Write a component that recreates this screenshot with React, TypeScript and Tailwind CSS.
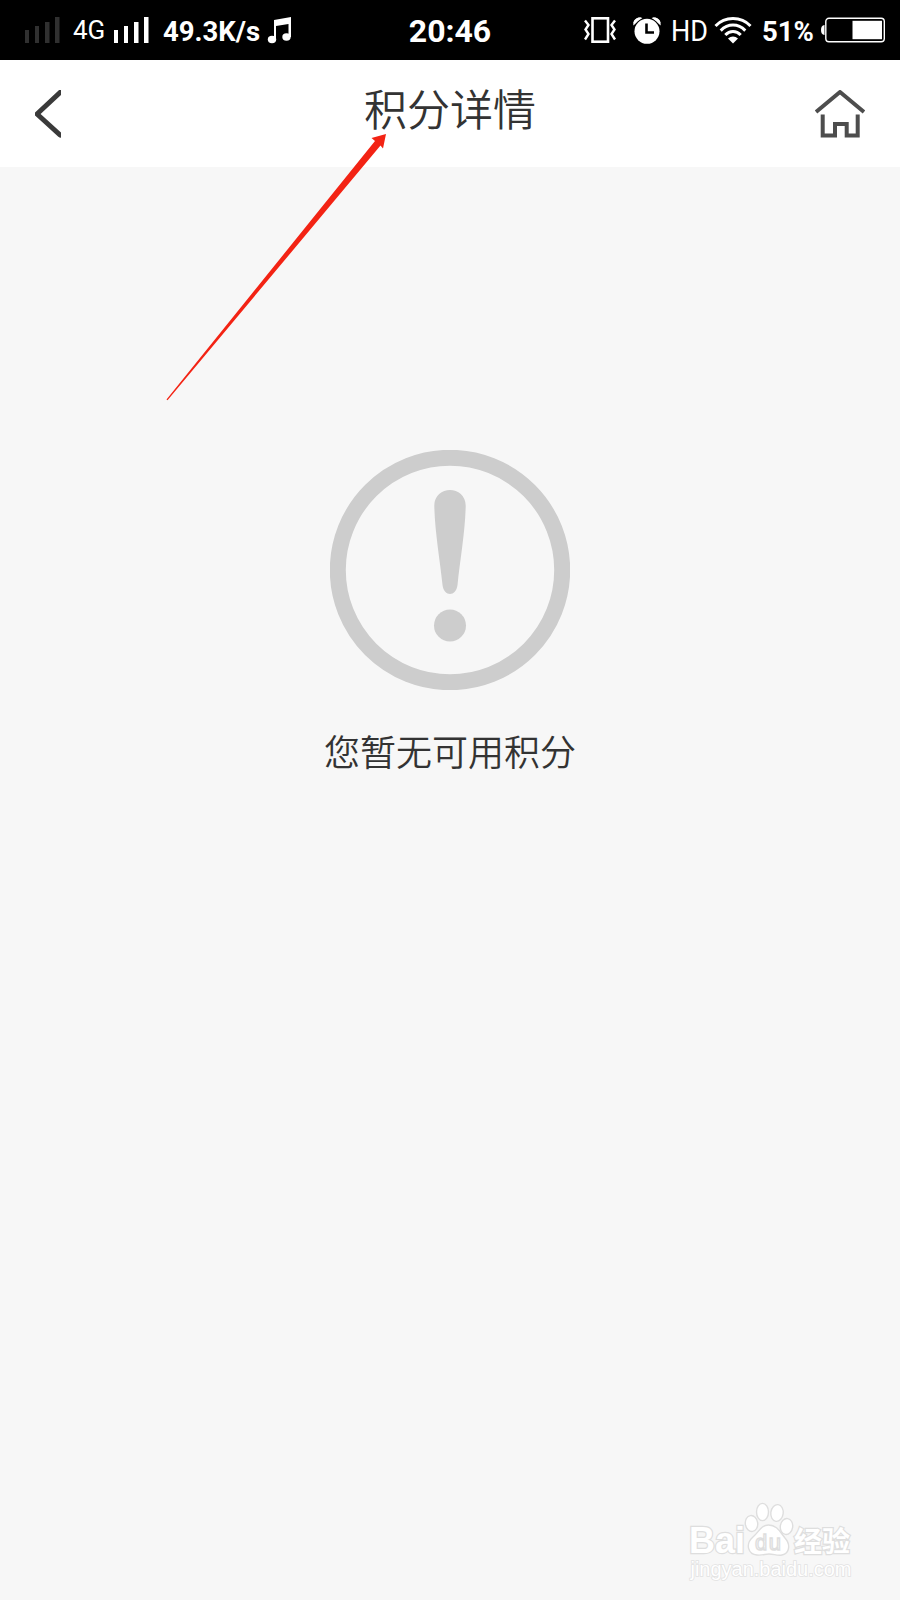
import React from "react";

const SignalBars = ({ className }: { className: string }): JSX.Element => (
  <svg className={`block h-[26px] w-[35px] shrink-0 ${className}`} viewBox="0 0 35 26" fill="currentColor">
    <rect x="0" y="13" width="4" height="13" />
    <rect x="10" y="9" width="4" height="17" />
    <rect x="20" y="5" width="4.5" height="21" />
    <rect x="30" y="0" width="4.5" height="26" />
  </svg>
);

const StatusBar = () => {
  return (
    <div className="grid h-[60px] grid-cols-[1fr_auto_1fr] items-center bg-black font-['Roboto',sans-serif] text-white">
      <div className="flex items-center pl-[25px]">
        <SignalBars className="text-[#303030]" />
        <span className="ml-[13px] w-[41px] text-[26px] leading-[60px]">4G</span>
        <SignalBars className="text-white" />
        <span className="ml-[14px] w-[104px] pt-[3px] text-[27.5px] font-bold leading-[57px]">49.3K/s</span>
        {/* music note */}
        <svg className="block h-[27px] w-[25px]" viewBox="0 0 25 27" fill="white">
          <path d="M7 3 L24 0 V20 H21.5 V7 L9 9 V22 H7 Z" />
          <ellipse cx="5" cy="22.5" rx="4.2" ry="3.7" />
          <ellipse cx="19.5" cy="20" rx="4.2" ry="3.7" />
        </svg>
      </div>

      <div className="pt-[3px] text-[32px] font-bold leading-[57px]">20:46</div>

      <div className="flex items-center justify-end pr-[15px]">
        {/* vibrate */}
        <svg className="block h-[26px] w-[33px]" viewBox="0 0 33 26" fill="none" stroke="white">
          <rect x="8.5" y="1.3" width="15.5" height="23.4" strokeWidth="2.6" />
          <path d="M1 3.5 L4.5 8 L1.5 12.5 L4.5 17 L1 22.5 M31 3.5 L27.5 8 L30.5 12.5 L27.5 17 L31 22.5" strokeWidth="2.4" />
        </svg>
        {/* alarm */}
        <svg className="ml-[16px] block h-[27px] w-[28px]" viewBox="0 0 28 27">
          <path d="M0.3 8.5 C0 3 5 -1 9.5 1 Z M27.7 8.5 C28 3 23 -1 18.5 1 Z" fill="white" />
          <circle cx="14" cy="14.3" r="13.6" fill="black" />
          <path d="M0.3 6.5 C0.5 2 5 -0.5 8.5 0.8 Z M27.7 6.5 C27.500 2 23 -0.5 19.500 0.8 Z" fill="white" />
          <circle cx="14" cy="14.3" r="12.5" fill="white" />
          <path d="M13.5 6.5 V15.5 H21" fill="none" stroke="black" strokeWidth="2.6" />
        </svg>
        <span className="ml-[10px] w-[43px] origin-left scale-x-90 pt-[2px] text-[30px] leading-[58px]">HD</span>
        {/* wifi */}
        <svg className="block h-[27px] w-[38px]" viewBox="0 0 38 27" fill="none" stroke="white" strokeWidth="3">
          <path d="M1.5 9 C11 -0.9 27 -0.9 36.5 9" />
          <path d="M6.7 13.6 C14 6.2 24 6.2 31.3 13.6" />
          <path d="M11.3 18 C15.7 13.4 22.3 13.4 26.7 18" />
          <path d="M14 21.5 C17 18.8 21 18.8 24 21.5 L19 26.5 Z" fill="white" stroke="none" />
        </svg>
        <span className="ml-[10px] w-[59px] pt-[3px] text-[27.5px] font-bold leading-[57px]">51%</span>
        {/* battery */}
        <svg className="block h-[26px] w-[64px]" viewBox="0 0 64 26">
          <path d="M3.5 8 C1 8.5 0 10 0 13 C0 16 1 17.5 3.5 18 Z" fill="white" />
          <rect x="4.8" y="1.2" width="58.5" height="23.6" rx="3.2" fill="none" stroke="white" strokeWidth="1.4" />
          <rect x="31.5" y="3.8" width="29.5" height="18.4" fill="white" />
        </svg>
      </div>
    </div>
  );
};

const Header = () => {
  return (
    <header className="flex h-[107px] items-start justify-between bg-white pl-[35px] pr-[35px]">
      <button className="mt-[30px] w-[50px]" aria-label="back">
        <svg className="block h-[48px] w-[26px]" viewBox="0 0 26 48" fill="none" stroke="#3a3a3a" strokeWidth="5">
          <path d="M25 2.5 L2 24 L25 45" strokeLinejoin="round" strokeLinecap="round" />
        </svg>
      </button>
      <h1 className="mt-[16px] text-[43px] font-[350] leading-[62px] text-[#333]">积分详情</h1>
      <button className="mt-[30px] w-[50px]" aria-label="home">
        <svg className="block h-[48px] w-[50px]" viewBox="0 0 50 48" fill="none" stroke="#4d4d4d" strokeWidth="4">
          <path d="M1 22 L25 2 L49 22" strokeLinejoin="round" />
          <path d="M7.7 24.5 V45.6 H20 V34 H31.7 V45.6 H42.7 V24.5" />
        </svg>
      </button>
    </header>
  );
};

const Watermark = () => {
  return (
    <svg
      className="absolute bottom-[12px] right-[50px] block h-[92px] w-[170px]"
      viewBox="680 1496 170 92"
      overflow="visible"
      fill="white"
      stroke="#dedede"
      fontFamily="Liberation Sans, Noto Sans CJK SC, sans-serif"
    >
      <g strokeWidth="2.4" paintOrder="stroke" fontWeight="bold">
        <text x="689" y="1553" fontSize="36" textLength="56" lengthAdjust="spacingAndGlyphs">Bai</text>
        <text x="794" y="1552" fontSize="28" fontFamily="Noto Sans CJK SC, sans-serif">经验</text>
      </g>
      <g strokeWidth="1.4">
        <ellipse cx="751.5" cy="1523.5" rx="6.2" ry="8" transform="rotate(-8 751.5 1523.5)" />
        <ellipse cx="762.5" cy="1512" rx="6" ry="8.6" />
        <ellipse cx="777" cy="1513" rx="6.2" ry="8.4" transform="rotate(8 777 1513)" />
        <ellipse cx="786.5" cy="1526.5" rx="6.2" ry="8" transform="rotate(8 786.5 1526.5)" />
        <path d="M768.5 1525 C761 1525 759 1532 753 1537 C745 1544 748 1554.500 757 1555 C763 1555.500 765 1554 769 1554 C774 1554 777 1556 782 1555 C790 1553.500 790.500 1544 785 1538 C780 1532 777 1525 768.500 1525 Z" />
        <text x="755" y="1550" fontSize="22" textLength="26">du</text>
      </g>
      <text x="690.5" y="1575.5" fontSize="20" strokeWidth="1.6" stroke="#e2e2e2" paintOrder="stroke" textLength="161">
        jingyan.baidu.com
      </text>
    </svg>
  );
};

const App = (): JSX.Element => {
  return (
    <div className="relative flex h-[1600px] w-[900px] flex-col overflow-hidden bg-[#f7f7f7] font-['Noto_Sans_CJK_SC',sans-serif]">
      <StatusBar />
      <Header />

      <main className="flex flex-col items-center pt-[283px]">
        <svg className="block h-[240px] w-[240px]" viewBox="0 0 240 240" fill="#cdcdcd">
          <circle cx="120" cy="120" r="112.2" fill="none" stroke="#cdcdcd" strokeWidth="16" />
          <path d="M104.3 56 C104 34.500 136 34.500 135.7 56 C135.2 82 130 110 127.5 135 C126 147 114 147 112.5 135 C110 110 104.8 82 104.3 56 Z" />
          <circle cx="120" cy="175.500" r="16" />
        </svg>
        <p className="mt-[33px] text-[36px] font-[350] leading-[54px] text-[#333]">您暂无可用积分</p>
      </main>

      {/* pointer to the title */}
      <svg className="absolute left-[160px] top-[130px] block h-[275px] w-[232px]" viewBox="160 130 232 275">
        <path d="M386 134 L371.5 138 L375 141 L166.5 399.5 L167.5 400.3 L380.5 145.5 L383 148.5 Z" fill="#f32314" />
      </svg>

      <Watermark />
    </div>
  );
};

export default App;
